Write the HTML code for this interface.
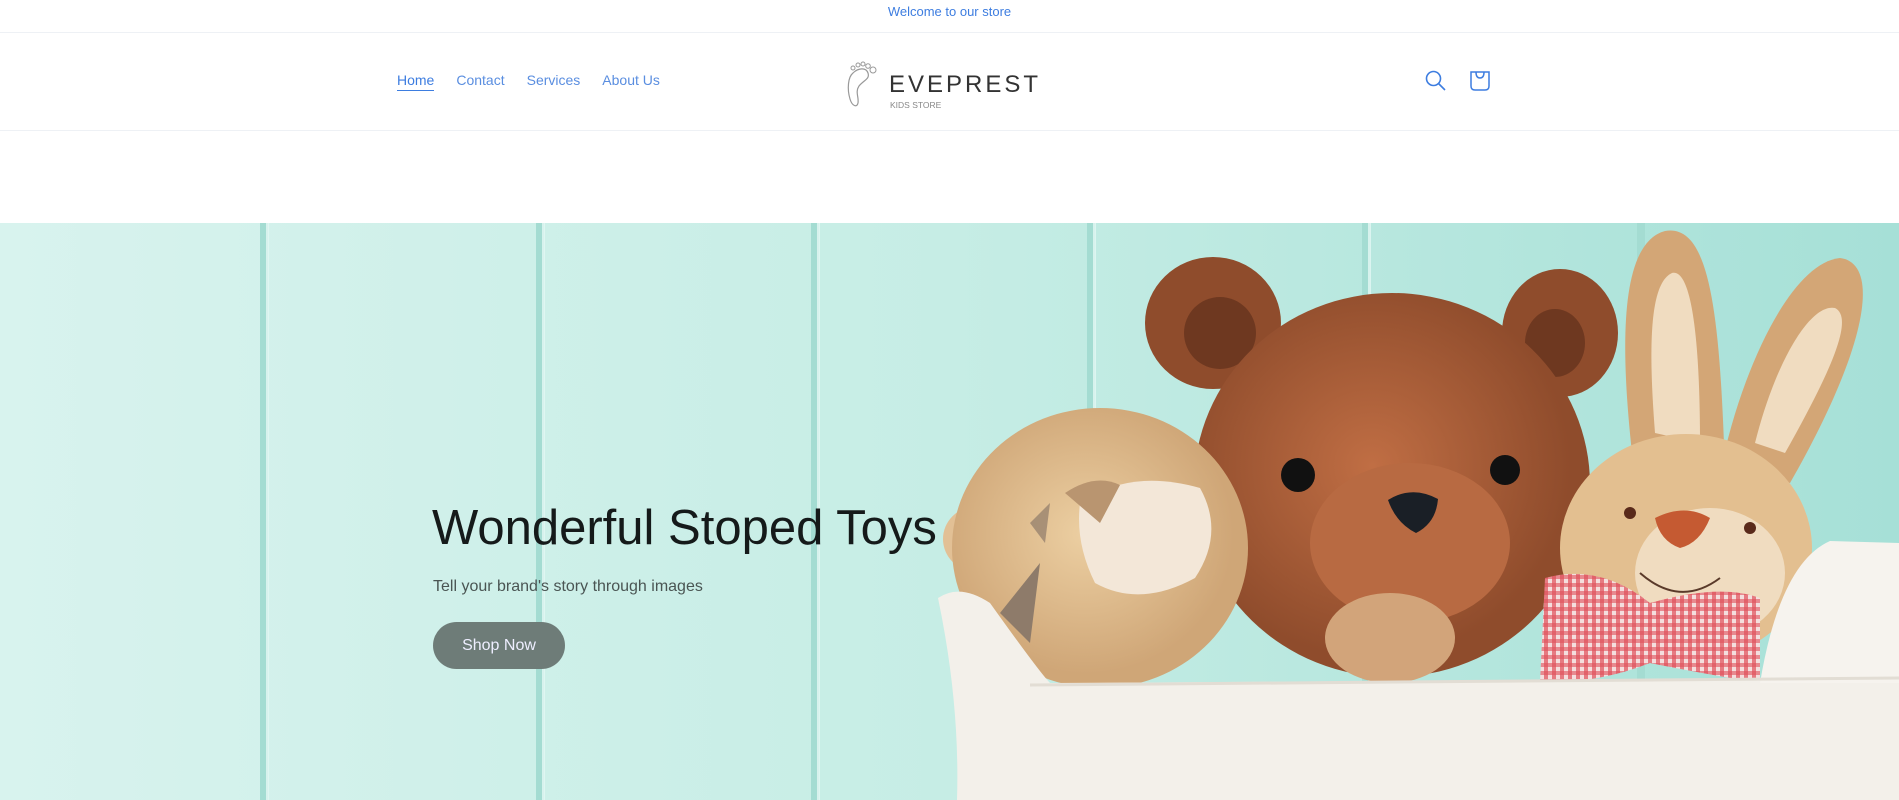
<!DOCTYPE html>
<html><head><meta charset="utf-8"><style>
*{margin:0;padding:0;box-sizing:border-box}
body{width:1899px;height:800px;overflow:hidden;background:#fff;font-family:"Liberation Sans",sans-serif}
.ann{height:33px;border-bottom:1px solid #eef1f5;text-align:center;font-size:13px;color:#3d7de0;line-height:23px}
.hdr{position:relative;height:98px;border-bottom:1px solid #eef1f5}
.nav{position:absolute;left:397px;top:39px;font-size:14px;color:#5a8ee0}
.nav span{margin-right:22px}
.nav .a{color:#3d7de0;border-bottom:1.5px solid #3d7de0;padding-bottom:2px}
.logo{position:absolute;left:846px;top:26px}
.hero{position:absolute;left:0;top:223px;width:1899px;height:577px;overflow:hidden}
.t{position:absolute;left:432px;top:277px;font-size:49px;color:#151a1a;font-weight:300;letter-spacing:0}
.s{position:absolute;left:433px;top:355px;font-size:16px;color:#4a5553}
.b{position:absolute;left:433px;top:399px;width:132px;height:47px;border-radius:24px;background:#6e7c78;color:#eef;font-size:16px;text-align:center;line-height:47px}
</style></head><body>
<div class="ann">Welcome to our store</div>
<div class="hdr">
<div class="nav"><span class="a">Home</span><span>Contact</span><span>Services</span><span>About Us</span></div>
<svg class="logo" width="210" height="50" viewBox="0 0 210 50">
<path d="M7 14 C2 18 1 30 4 40 C6 47 11 49 12 44 C13 38 9 33 13 27 C18 21 24 20 22 14 C20 8 12 9 7 14Z" fill="none" stroke="#999" stroke-width="1.2"/>
<circle cx="7" cy="9" r="2" fill="none" stroke="#999"/><circle cx="12" cy="6" r="2" fill="none" stroke="#999"/><circle cx="17" cy="5" r="2" fill="none" stroke="#999"/><circle cx="22" cy="7" r="2.3" fill="none" stroke="#999"/><circle cx="27" cy="11" r="3" fill="none" stroke="#999"/>
<text x="43" y="33" font-family="Liberation Sans,sans-serif" font-size="24" fill="#333" letter-spacing="3">EVEPREST</text>
<text x="44" y="49" font-family="Liberation Sans,sans-serif" font-size="8.5" fill="#888">KIDS STORE</text>
</svg>
<svg style="position:absolute;left:1424px;top:36px" width="24" height="24" viewBox="0 0 24 24" fill="none" stroke="#3d7de0" stroke-width="1.6"><circle cx="9.5" cy="9.5" r="7"/><path d="M14.5 14.5L21 21"/></svg>
<svg style="position:absolute;left:1469px;top:37px" width="22" height="22" viewBox="0 0 22 22" fill="none" stroke="#3d7de0" stroke-width="1.5"><path d="M2 2H20V16Q20 20 16 20H6Q2 20 2 16Z"/><path d="M7 2Q7 8 11 8Q15 8 15 2"/></svg>
</div>
<div class="hero">
<svg width="1899" height="577" viewBox="0 0 1899 577">
<defs>
<linearGradient id="bg" x1="0" x2="1"><stop offset="0" stop-color="#d8f3ee"/><stop offset=".5" stop-color="#c6ede5"/><stop offset="1" stop-color="#a6e0d7"/></linearGradient>
<radialGradient id="br" cx=".45" cy=".45"><stop offset="0" stop-color="#c06e44"/><stop offset="1" stop-color="#8f4c2c"/></radialGradient>
<radialGradient id="tg" cx=".45" cy=".45"><stop offset="0" stop-color="#eccfa2"/><stop offset="1" stop-color="#cfa677"/></radialGradient>
<pattern id="ck" width="8" height="8" patternUnits="userSpaceOnUse"><rect width="8" height="8" fill="#f4dede"/><rect width="4" height="8" fill="#e0505a" opacity=".7"/><rect width="8" height="4" fill="#e0505a" opacity=".6"/></pattern>
</defs>
<rect width="1899" height="577" fill="url(#bg)"/>
<g fill="#a4dcd2"><rect x="260" width="8" height="577"/><rect x="536" width="8" height="577"/><rect x="811" width="8" height="577"/><rect x="1087" width="8" height="577"/><rect x="1362" width="8" height="577"/><rect x="1637" width="8" height="577"/></g>
<g fill="#e4f8f4" opacity=".8"><rect x="266" width="3" height="577"/><rect x="542" width="3" height="577"/><rect x="817" width="3" height="577"/><rect x="1093" width="3" height="577"/><rect x="1368" width="3" height="577"/></g>
<path d="M1632 230 C1620 120 1620 20 1665 8 C1710 0 1720 90 1725 250Z" fill="#d3a676"/>
<path d="M1655 210 C1648 120 1650 60 1672 50 C1692 45 1700 120 1700 220Z" fill="#f0dcc0"/>
<path d="M1720 250 C1740 150 1790 40 1840 35 C1880 40 1870 120 1790 260Z" fill="#d3a676"/>
<path d="M1755 220 C1775 140 1810 80 1835 85 C1855 95 1830 150 1785 230Z" fill="#f0dcc0"/>
<ellipse cx="1213" cy="100" rx="68" ry="66" fill="#8f4c2c"/><ellipse cx="1220" cy="110" rx="36" ry="36" fill="#6e3820"/>
<ellipse cx="1560" cy="110" rx="58" ry="64" fill="#8f4c2c"/><ellipse cx="1555" cy="120" rx="30" ry="34" fill="#6e3820"/>
<ellipse cx="1392" cy="262" rx="198" ry="192" fill="url(#br)"/>
<ellipse cx="1410" cy="320" rx="100" ry="80" fill="#b86a42"/>
<circle cx="1298" cy="252" r="17" fill="#111"/><circle cx="1505" cy="247" r="15" fill="#111"/>
<path d="M1388 277 Q1412 262 1438 276 Q1436 300 1416 310 Q1396 300 1388 277Z" fill="#1a1f26"/>
<ellipse cx="1390" cy="415" rx="65" ry="45" fill="#d2a47a"/>
<circle cx="975" cy="316" r="32" fill="#e2c095"/>
<ellipse cx="1100" cy="325" rx="148" ry="140" fill="url(#tg)"/>
<path d="M1080 280 Q1130 245 1200 265 Q1225 310 1195 355 Q1140 385 1095 360 Q1075 320 1080 280Z" fill="#f3e7d8"/>
<path d="M1065 270 Q1095 250 1120 262 L1100 300Z" fill="#b99570"/>
<path d="M1000 390 L1040 340 L1030 420Z" fill="#8e7b6a"/>
<path d="M1030 300 L1050 280 L1045 320Z" fill="#8e7b6a" opacity=".7"/>
<ellipse cx="1686" cy="325" rx="126" ry="114" fill="#e3bf90"/>
<ellipse cx="1710" cy="350" rx="75" ry="65" fill="#f0dcc0"/>
<path d="M1655 295 Q1685 280 1710 295 Q1700 320 1680 325 Q1660 318 1655 295Z" fill="#c55a32"/>
<circle cx="1630" cy="290" r="6" fill="#5a2a1a"/><circle cx="1750" cy="305" r="6" fill="#5a2a1a"/>
<path d="M1640 350 Q1680 385 1720 355" fill="none" stroke="#5a3a2a" stroke-width="2"/>
<path d="M1545 355 Q1600 340 1650 380 Q1720 360 1760 375 L1760 460 Q1700 450 1650 440 Q1600 460 1540 460Z" fill="url(#ck)"/>
<path d="M938 375 Q960 360 990 380 Q1040 450 1050 460 L1899 455 L1899 577 L957 577 Q960 480 938 375Z" fill="#f3f0ea"/>
<path d="M1760 460 Q1780 340 1830 318 L1899 320 L1899 460Z" fill="#f6f3ee"/>
<path d="M1030 462 L1899 455" stroke="#e2ddd4" stroke-width="3"/>
</svg>
<div class="t">Wonderful Stoped Toys</div>
<div class="s">Tell your brand's story through images</div>
<div class="b">Shop Now</div>
</div>
</body></html>
